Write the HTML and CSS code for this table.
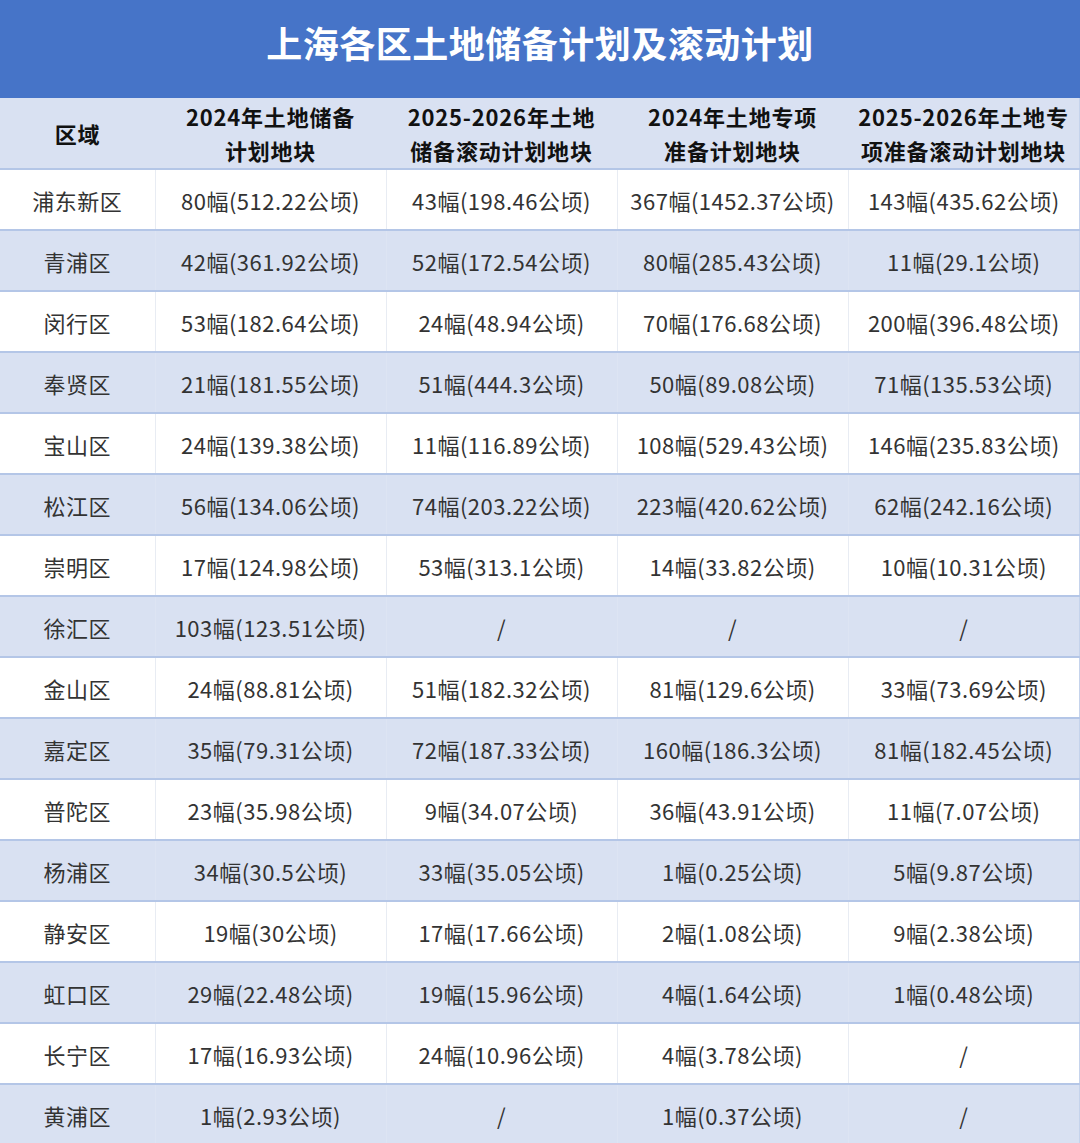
FILE: index.html
```html
<!DOCTYPE html>
<html lang="zh-CN">
<head>
<meta charset="utf-8">
<title>上海各区土地储备计划及滚动计划</title>
<link rel="stylesheet" href="styles.css">
</head>
<body>
<div class="sheet">
  <div class="title">上海各区土地储备计划及滚动计划</div>
  <table class="grid">
    <colgroup>
      <col class="c-area"><col class="c-num"><col class="c-num"><col class="c-num"><col class="c-num-last">
    </colgroup>
    <thead>
      <tr>
        <th>区域</th>
        <th>2024年土地储备<br>计划地块</th>
        <th>2025-2026年土地<br>储备滚动计划地块</th>
        <th>2024年土地专项<br>准备计划地块</th>
        <th>2025-2026年土地专<br>项准备滚动计划地块</th>
      </tr>
    </thead>
    <tbody>
      <tr><td>浦东新区</td><td>80幅(512.22公顷)</td><td>43幅(198.46公顷)</td><td>367幅(1452.37公顷)</td><td>143幅(435.62公顷)</td></tr>
      <tr><td>青浦区</td><td>42幅(361.92公顷)</td><td>52幅(172.54公顷)</td><td>80幅(285.43公顷)</td><td>11幅(29.1公顷)</td></tr>
      <tr><td>闵行区</td><td>53幅(182.64公顷)</td><td>24幅(48.94公顷)</td><td>70幅(176.68公顷)</td><td>200幅(396.48公顷)</td></tr>
      <tr><td>奉贤区</td><td>21幅(181.55公顷)</td><td>51幅(444.3公顷)</td><td>50幅(89.08公顷)</td><td>71幅(135.53公顷)</td></tr>
      <tr><td>宝山区</td><td>24幅(139.38公顷)</td><td>11幅(116.89公顷)</td><td>108幅(529.43公顷)</td><td>146幅(235.83公顷)</td></tr>
      <tr><td>松江区</td><td>56幅(134.06公顷)</td><td>74幅(203.22公顷)</td><td>223幅(420.62公顷)</td><td>62幅(242.16公顷)</td></tr>
      <tr><td>崇明区</td><td>17幅(124.98公顷)</td><td>53幅(313.1公顷)</td><td>14幅(33.82公顷)</td><td>10幅(10.31公顷)</td></tr>
      <tr><td>徐汇区</td><td>103幅(123.51公顷)</td><td>/</td><td>/</td><td>/</td></tr>
      <tr><td>金山区</td><td>24幅(88.81公顷)</td><td>51幅(182.32公顷)</td><td>81幅(129.6公顷)</td><td>33幅(73.69公顷)</td></tr>
      <tr><td>嘉定区</td><td>35幅(79.31公顷)</td><td>72幅(187.33公顷)</td><td>160幅(186.3公顷)</td><td>81幅(182.45公顷)</td></tr>
      <tr><td>普陀区</td><td>23幅(35.98公顷)</td><td>9幅(34.07公顷)</td><td>36幅(43.91公顷)</td><td>11幅(7.07公顷)</td></tr>
      <tr><td>杨浦区</td><td>34幅(30.5公顷)</td><td>33幅(35.05公顷)</td><td>1幅(0.25公顷)</td><td>5幅(9.87公顷)</td></tr>
      <tr><td>静安区</td><td>19幅(30公顷)</td><td>17幅(17.66公顷)</td><td>2幅(1.08公顷)</td><td>9幅(2.38公顷)</td></tr>
      <tr><td>虹口区</td><td>29幅(22.48公顷)</td><td>19幅(15.96公顷)</td><td>4幅(1.64公顷)</td><td>1幅(0.48公顷)</td></tr>
      <tr><td>长宁区</td><td>17幅(16.93公顷)</td><td>24幅(10.96公顷)</td><td>4幅(3.78公顷)</td><td>/</td></tr>
      <tr><td>黄浦区</td><td>1幅(2.93公顷)</td><td>/</td><td>1幅(0.37公顷)</td><td>/</td></tr>
    </tbody>
  </table>
</div>
</body>
</html>
```

FILE: styles.css
```css
html, body {
  margin: 0;
  padding: 0;
  background: #ffffff;
}

body {
  font-family: "Noto Sans CJK SC", "Noto Sans", sans-serif;
  width: 1080px;
  height: 1143px;
  overflow: hidden;
}

.sheet {
  width: 1080px;
}

.title {
  height: 98px;
  box-sizing: border-box;
  background: #4674c8;
  color: #ffffff;
  font-size: 36px;
  font-weight: 700;
  display: flex;
  align-items: center;
  justify-content: center;
  padding-bottom: 14px;
  letter-spacing: 0.5px;
}

.grid {
  width: 1080px;
  border-collapse: collapse;
  table-layout: fixed;
  border-right: 2px solid #c5d3ec;
}

.c-area { width: 155px; }
.c-num { width: 231px; }
.c-num-last { width: 232px; }

.grid th {
  height: 70px;
  padding: 0;
  background: #d9e1f2;
  color: #111111;
  font-size: 22px;
  font-weight: 700;
  line-height: 34px;
  letter-spacing: 0.8px;
  text-align: center;
  white-space: nowrap;
  border-bottom: 2px solid #b4c6e7;
}

.grid td {
  height: 59px;
  padding: 0;
  font-size: 22px;
  letter-spacing: 0.5px;
  color: #333333;
  text-align: center;
  white-space: nowrap;
  border-bottom: 2px solid #b4c6e7;
  border-left: 1px solid #e8ecf3;
}

.grid td:first-child {
  border-left: none;
}

.grid tbody tr:nth-child(odd) td {
  background: #ffffff;
}

.grid tbody tr:nth-child(even) td {
  background: #d9e1f2;
  border-left-color: #dde4f3;
}
```
